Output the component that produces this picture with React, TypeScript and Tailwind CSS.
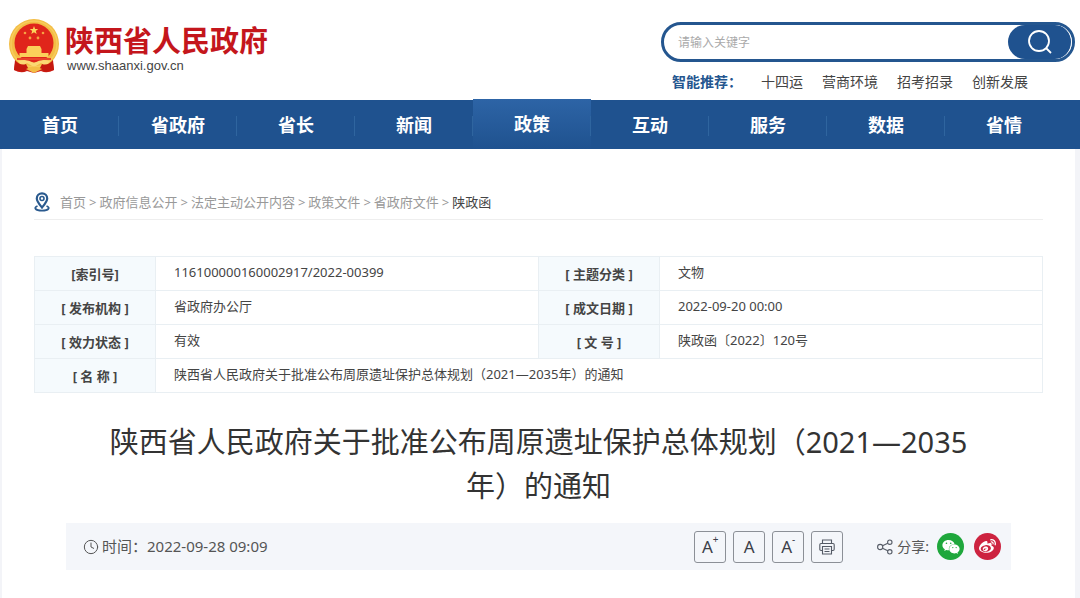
import { Clock } from 'lucide-react';
import { FaWeibo, FaWeixin } from 'react-icons/fa';

const navItems = ['首页', '省政府', '省长', '新闻', '政策', '互动', '服务', '数据', '省情'];
const hotWords = ['十四运', '营商环境', '招考招录', '创新发展'];
const crumbs = ['首页', '政府信息公开', '法定主动公开内容', '政策文件', '省政府文件'];

const infoRows = [
  ['[索引号]', '116100000160002917/2022-00399', '[ 主题分类 ]', '文物'],
  ['[ 发布机构 ]', '省政府办公厅', '[ 成文日期 ]', '2022-09-20 00:00'],
  ['[ 效力状态 ]', '有效', '[ 文 号 ]', '陕政函〔2022〕120号'],
  ['[ 名 称 ]', '陕西省人民政府关于批准公布周原遗址保护总体规划（2021—2035年）的通知'],
];

function Emblem() {
  return (
    <svg viewBox="0 0 52 56" className="h-14 w-[52px] shrink-0" aria-hidden="true">
      <path d="M8 38 L44 38 L46 52 Q39 56 33 53 L26 55 L19 53 Q13 56 6 52 Z" fill="#cf2118" />
      <circle cx="26" cy="26" r="25" fill="#f3bd45" />
      <circle cx="26" cy="26" r="23" fill="none" stroke="#f7cb5c" strokeWidth="1.500" />
      <circle cx="26" cy="25" r="19.500" fill="#e0251b" />
      <path d="M26 8 l1.1 2.9 3.1.1 -2.4 1.9 .9 3 -2.7-1.7 -2.7 1.7 .9-3 -2.4-1.9 3.1-.1z" fill="#fbd65c" />
      <g fill="#f6a243">
        <circle cx="17" cy="15" r="1.300" />
        <circle cx="35" cy="15" r="1.300" />
        <circle cx="22" cy="20" r="1.400" />
        <circle cx="30" cy="20" r="1.400" />
      </g>
      <path d="M20 28 h12 l1.500 3 h-15z M18.500 31 h15 v4 h7 v4 h-29 v-4 h7z" fill="#fbd05a" />
      <path d="M9 40 h34 v2 h-34z" fill="#e8452a" />
      <path d="M10 43 Q18 40 26 45 Q34 40 42 43 L38 48 L33 45 L26 49 L19 45 L14 48 Z" fill="#fbd873" />
      <path d="M7 42 q5 6 11 4 l2 4 -5 4 -9-2z M45 42 q-5 6 -11 4 l-2 4 5 4 9-2z" fill="#c5190f" />
      <path d="M18 51 q8-5 16 0 l-8 4z" fill="#f3bd45" />
    </svg>
  );
}

function PinIcon() {
  return (
    <svg viewBox="0 0 16 20" className="h-5 w-4 shrink-0" fill="none" stroke="#2a5a8e" aria-hidden="true">
      <path d="M8 15.500 C5.500 12.500 2.800 9.500 2.800 6.500 A5.200 5.200 0 0 1 13.200 6.500 C13.200 9.500 10.500 12.500 8 15.500Z" strokeWidth="2.200" />
      <circle cx="8" cy="6.500" r="2" strokeWidth="1.600" />
      <path d="M3.500 14 C-.5 15.500 1 18.600 8 18.600 S16.500 15.500 12.500 14" strokeWidth="1.800" />
    </svg>
  );
}

function PrintIcon() {
  return (
    <svg viewBox="0 0 16 16" className="size-4" fill="none" stroke="#555b66" strokeWidth="1.100" aria-hidden="true">
      <path d="M3.500 4 V1 H12.500 V4" />
      <path d="M3.500 11.500 H2 Q.8 11.500 .8 10.300 V5.700 Q.8 4.500 2 4.500 H14 Q15.200 4.500 15.200 5.700 V10.300 Q15.200 11.500 14 11.500 H12.500" />
      <path d="M3.500 7.500 H12.500 V15 H3.500Z M5.500 10 H10.500 M5.500 12.500 H10.500" />
    </svg>
  );
}

function ShareIcon() {
  return (
    <svg viewBox="0 0 16 16" className="size-4 shrink-0" fill="none" stroke="#555b66" strokeWidth="1.100" aria-hidden="true">
      <circle cx="3.200" cy="8" r="2.600" />
      <circle cx="12.800" cy="3.200" r="2.200" />
      <circle cx="12.800" cy="12.800" r="2.200" />
      <path d="M5.500 6.800 L10.800 4.200 M5.500 9.200 L10.800 11.800" />
    </svg>
  );
}

export default function App() {
  const toolButton =
    'flex size-8 items-center justify-center rounded-[3px] border border-[#8c9097] text-[17px] leading-none text-[#3c4048]';

  return (
    <div className="min-h-screen bg-[#f3f4f8] font-['Noto_Sans','Noto_Sans_CJK_SC',sans-serif] text-[#444]" lang="zh-CN">
      <header className="flex h-[100px] justify-between bg-white pr-[5px] pl-2">
        <a href="#" className="flex items-start gap-[5px] pt-[18px]">
          <Emblem />
          <span className="flex flex-col pt-1">
            <span className="text-[29px] leading-[37px] font-bold text-[#c4161c]">陕西省人民政府</span>
            <span className="pl-0.5 font-['Liberation_Sans',Arial,sans-serif] text-[13px] leading-[14px] text-[#444]">
              www.shaanxi.gov.cn
            </span>
          </span>
        </a>

        <div className="w-[414px] pt-[22px]">
          <form className="flex h-10 items-stretch rounded-full border-3 border-[#24568f] bg-white">
            <input
              type="text"
              aria-label="请输入关键字"
              placeholder="请输入关键字"
              className="min-w-0 flex-1 rounded-l-full pt-0.5 pl-3.5 text-xs outline-none placeholder:text-[#aaa]"
            />
            <button
              type="submit"
              aria-label="搜索"
              className="flex w-16 items-center justify-center rounded-full border-r border-white bg-[#1f528f]"
            >
              <svg viewBox="0 0 26 26" className="size-[26px]" fill="none" stroke="white" strokeWidth="1.800" aria-hidden="true">
                <circle cx="12" cy="12" r="10" />
                <path d="M19 19 L24 24" />
              </svg>
            </button>
          </form>
          <div className="mt-2.5 flex gap-[19px] pl-[11px] text-sm leading-5">
            <span className="font-bold text-[#24568f]">智能推荐：</span>
            {hotWords.map((word) => (
              <a key={word} href="#">{word}</a>
            ))}
          </div>
        </div>
      </header>

      <nav className="bg-[#1f528f] pr-[17px] pl-px">
        <ul className="grid h-[49px] grid-cols-9">
          {navItems.map((item) => (
            <li key={item} className="relative flex">
              {item === '政策' ? (
                <a
                  href="#"
                  aria-current="page"
                  className="-mt-px flex flex-1 items-center justify-center bg-linear-to-b from-[#2d64a6] to-[#1f528f] text-lg font-bold text-white"
                >
                  {item}
                </a>
              ) : (
                <a
                  href="#"
                  className="flex flex-1 items-center justify-center text-lg font-bold text-white"
                >
                  {item}
                </a>
              )}
              {item !== '省情' && <span className="absolute top-4 right-0 h-5 w-px bg-[#2f659f]" />}
            </li>
          ))}
        </ul>
      </nav>

      <main className="mr-[5px] ml-0.5 min-h-[449px] bg-white px-8 pt-[39px] pb-7">
        <nav aria-label="当前位置" className="flex items-center border-b border-[#eee] pb-[3px] text-[13px] leading-7 text-[#999]">
          <PinIcon />
          <ol className="ml-2.5 flex">
            {crumbs.map((crumb) => (
              <li key={crumb} className="flex">
                <a href="#">{crumb}</a>
                <span className="mx-[3px]">&gt;</span>
              </li>
            ))}
            <li className="text-[#444]">陕政函</li>
          </ol>
        </nav>

        <table className="mt-9 w-full table-fixed border-collapse text-[13px] leading-5">
          <colgroup>
            <col className="w-[121px]" />
            <col />
            <col className="w-[121px]" />
            <col />
          </colgroup>
          <tbody>
            {infoRows.map(([label, value, label2, value2]) => (
              <tr key={label} className="h-[34px]">
                <th scope="row" className="border border-[#e9eff3] bg-[#f5fafd] font-bold">{label}</th>
                <td colSpan={label2 ? 1 : 3} className="border border-[#e9eff3] pb-1 pl-[18px]">{value}</td>
                {label2 && (
                  <>
                    <th scope="row" className="border border-[#e9eff3] bg-[#f5fafd] font-bold">{label2}</th>
                    <td className="border border-[#e9eff3] pb-1 pl-[18px]">{value2}</td>
                  </>
                )}
              </tr>
            ))}
          </tbody>
        </table>

        <h1 className="mt-[27px] px-16 text-center text-[29px] leading-[44px] text-[#333]">
          陕西省人民政府关于批准公布周原遗址保护总体规划（2021—2035年）的通知
        </h1>

        <div className="mx-8 mt-[15px] flex h-[47px] items-center justify-between bg-[#f4f6fa] pr-2.5 pl-[17px] text-[15px] text-[#555]">
          <div className="flex items-center gap-[3px]">
            <Clock className="size-4" strokeWidth={1.5} />
            <span>时间：2022-09-28 09:09</span>
          </div>
          <div className="flex items-center">
            <div className="flex gap-[7px]">
              <button type="button" aria-label="放大字体" className={toolButton}>
                A<sup className="-top-2 text-[10px]">+</sup>
              </button>
              <button type="button" aria-label="默认字体" className={toolButton}>A</button>
              <button type="button" aria-label="缩小字体" className={toolButton}>
                A<sup className="-top-2 text-[10px]">-</sup>
              </button>
              <button type="button" aria-label="打印" className={toolButton}>
                <PrintIcon />
              </button>
            </div>
            <span className="ml-[34px] flex items-center gap-1 text-sm">
              <ShareIcon />
              分享:
            </span>
            <a href="#" aria-label="微信" className="ml-2 flex size-[27px] items-center justify-center rounded-full bg-[#1fa73c] text-white">
              <FaWeixin className="size-[18px]" />
            </a>
            <a href="#" aria-label="微博" className="ml-2.5 flex size-[27px] items-center justify-center rounded-full bg-[#cd2340] text-white">
              <FaWeibo className="size-[17px]" />
            </a>
          </div>
        </div>
      </main>
    </div>
  );
}
